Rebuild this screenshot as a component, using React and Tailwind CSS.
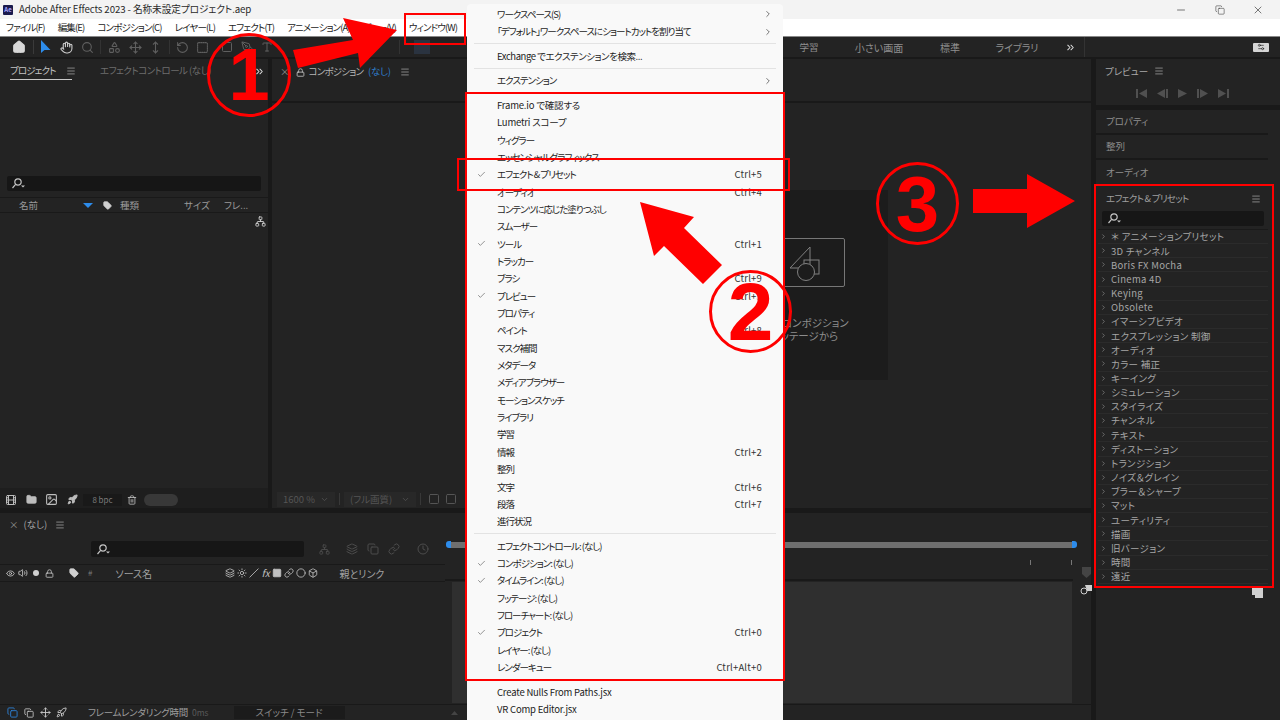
import React from "react";
import {
  House, Hand, Search, Move, MoveVertical, RotateCcw, Square, Pin, Folder, Trash2, Rocket, Tag, Eye,
  Volume2, Lock, Network, Menu, ChevronRight, ChevronDown, ChevronsRight, Check, Minus, X, Copy, Settings2,
  Shapes, Type, PenTool, Image, Film, Layers, Sun, Slash, Link, Clock, Circle, Box,
} from "lucide-react";

const menuTop = [
  { label: "ワークスペース(S)", arrow: true },
  { label: "「デフォルト」ワークスペースにショートカットを割り当て", arrow: true },
  { sep: true },
  { label: "Exchange でエクステンションを検索...", track: "tracking-[-0.45px]" },
  { sep: true },
  { label: "エクステンション", arrow: true },
  { sep: true },
  { label: "Frame.io で確認する", track: "tracking-[-0.2px]" },
  { label: "Lumetri スコープ", track: "tracking-[-0.2px]" },
  { label: "ウィグラー" },
  { label: "エッセンシャルグラフィックス" },
  { label: "エフェクト & プリセット", check: true, key: "Ctrl+5" },
  { label: "オーディオ", key: "Ctrl+4" },
  { label: "コンテンツに応じた塗りつぶし" },
  { label: "スムーザー" },
  { label: "ツール", check: true, key: "Ctrl+1" },
  { label: "トラッカー" },
  { label: "ブラシ", key: "Ctrl+9" },
  { label: "プレビュー", check: true, key: "Ctrl+3" },
  { label: "プロパティ" },
  { label: "ペイント", key: "Ctrl+8" },
  { label: "マスク補間" },
  { label: "メタデータ" },
  { label: "メディアブラウザー" },
  { label: "モーションスケッチ" },
  { label: "ライブラリ" },
  { label: "学習" },
  { label: "情報", key: "Ctrl+2" },
  { label: "整列" },
  { label: "文字", key: "Ctrl+6" },
  { label: "段落", key: "Ctrl+7" },
  { label: "進行状況" },
  { sep: true },
  { label: "エフェクトコントロール: (なし)" },
  { label: "コンポジション: (なし)", check: true },
  { label: "タイムライン: (なし)", check: true },
  { label: "フッテージ: (なし)" },
  { label: "フローチャート: (なし)" },
  { label: "プロジェクト", check: true, key: "Ctrl+0" },
  { label: "レイヤー: (なし)" },
  { label: "レンダーキュー", key: "Ctrl+Alt+0" },
  { sep: true },
  { label: "Create Nulls From Paths.jsx", track: "tracking-[-0.2px]" },
  { label: "VR Comp Editor.jsx", track: "tracking-[-0.2px]" },
];

const effects = [
  "＊ アニメーションプリセット", "3D チャンネル", "Boris FX Mocha", "Cinema 4D", "Keying", "Obsolete",
  "イマーシブビデオ", "エクスプレッション 制御", "オーディオ", "カラー 補正", "キーイング", "シミュレーション",
  "スタイライズ", "チャンネル", "テキスト", "ディストーション", "トランジション", "ノイズ＆グレイン",
  "ブラー＆シャープ", "マット", "ユーティリティ", "描画", "旧バージョン", "時間", "遠近",
];

// magnifier with the little dropdown caret
function SearchGlyph() {
  return (
    <svg width="16" height="11" viewBox="0 0 16 11" fill="none" stroke="#c4c4c4" strokeWidth="1.2">
      <circle cx="7" cy="4" r="3.2" />
      <path d="M4.6 6.4 1.5 10" />
      <path d="M10 7.5h4l-2 2z" fill="#c4c4c4" stroke="none" />
    </svg>
  );
}

function Burger({ className = "" }) {
  return <Menu size={10} strokeWidth={1.6} className={"shrink-0 text-[#b5b5b5] " + className} />;
}

function WindowMenu() {
  return (
    <div className="absolute left-[467px] top-[4px] w-[316px] h-[730px] bg-[#f9f9f9] rounded-[4px] pt-[1.6px] text-[#1c1c1c] text-[9.5px]">
      {menuTop.map((item, i) =>
        item.sep ? (
          <div key={i} className="h-[7.15px] flex items-center px-[7px]">
            <div className="h-px w-full bg-[#e3e3e3]" />
          </div>
        ) : (
          <div key={i} className="h-[17.35px] flex items-center relative pl-[30px] pr-[21px] whitespace-nowrap">
            {item.check && <Check size={9} strokeWidth={1.5} className="absolute left-[10px] text-[#444]" />}
            <span className={"flex-1 " + (item.track || "tracking-[-1px]")}>{item.label}</span>
            {item.key && <span className="text-[#333] tracking-[0.2px]">{item.key}</span>}
            {item.arrow && <ChevronRight size={10} strokeWidth={1.6} className="absolute right-[10px] text-[#333]" />}
          </div>
        )
      )}
    </div>
  );
}

function Annotations() {
  return (
    <>
      <div className="absolute left-[404px] top-[13px] w-[62px] h-[32px] border-2 border-[#ff0000]" />
      <div className="absolute left-[465px] top-[92px] w-[320px] h-[589px] border-2 border-[#ff0000]" />
      <div className="absolute left-[457px] top-[158px] w-[333px] h-[33px] border-2 border-[#ff0000]" />
      <div className="absolute left-[1094px] top-[184px] w-[180px] h-[404px] border-2 border-[#ff0000]" />

      <div className="absolute left-[207px] top-[33px] w-[84px] h-[84px] rounded-full border-[3px] border-[#ff0000] flex items-center justify-center text-[#ff0000] text-[74px] font-bold font-['Liberation_Sans',sans-serif] leading-none">1</div>
      <div className="absolute left-[709px] top-[270px] w-[83px] h-[83px] rounded-full border-[3px] border-[#ff0000] flex items-center justify-center text-[#ff0000] text-[82px] font-bold font-['Liberation_Sans',sans-serif] leading-none">2</div>
      <div className="absolute left-[876px] top-[162px] w-[83px] h-[83px] rounded-full border-[3px] border-[#ff0000] flex items-center justify-center text-[#ff0000] text-[78px] font-bold font-['Liberation_Sans',sans-serif] leading-none">3</div>

      <svg className="absolute left-0 top-0 pointer-events-none" width="1280" height="720" fill="#ff0000">
        <polygon points="397,30 343,18 353,40 293,50 298,68 358,53 360,68" />
        <polygon points="640,202 694,217 684,228 722,265 703,284 664,246 654,256" />
        <polygon points="973,189 1027,189 1027,174 1075,201 1027,228 1027,213 973,213" />
      </svg>
    </>
  );
}

function Toolbar() {
  return (
    <div className="h-[20px] bg-[#232323] flex items-center text-[#5f5f5f]">
      <House size={14} fill="#d8d8d8" className="text-[#d8d8d8] ml-[12px]" />
      <div className="w-px h-[14px] bg-[#3a3a3a] ml-[7px]" />
      <svg width="12" height="14" viewBox="0 0 12 14" className="ml-[6px]"><path d="M1 0v13l3.5-3h6z" fill="#2d8ceb" /></svg>
      <Hand size={13} className="text-[#cfcfcf] ml-[8px]" />
      <Search size={13} className="ml-[8px]" />
      <div className="w-px h-[14px] bg-[#333] ml-[6px]" />
      <Shapes size={13} className="ml-[7px]" />
      <Move size={13} className="ml-[8px]" />
      <MoveVertical size={13} className="ml-[7px]" />
      <div className="w-px h-[14px] bg-[#333] ml-[7px]" />
      <RotateCcw size={13} className="ml-[6px]" />
      <Square size={13} strokeDasharray="2 2" className="ml-[7px]" />
      <Square size={12} className="ml-[12px]" />
      <PenTool size={12} className="ml-[8px]" />
      <Type size={12} className="ml-[8px]" />
      <Pin size={12} className="ml-[86px]" />
      <div className="w-px h-[14px] bg-[#333] ml-[28px]" />
      <div className="w-[16px] h-[14px] bg-[#2a3340] ml-[14px]" />
      <div className="ml-[364px] w-[30px] text-center text-[9.5px] text-[#8f8f8f] mr-[25px]">学習</div>
      <div className="w-[60px] text-center text-[10px] text-[#8f8f8f]">小さい画面</div>
      <div className="w-[40px] text-center text-[10px] text-[#8f8f8f] ml-[21px]">標準</div>
      <div className="w-[50px] text-center text-[10px] text-[#8f8f8f] ml-[22px]">ライブラリ</div>
      <ChevronsRight size={11} strokeWidth={2.2} className="text-[#e0e0e0] ml-[23px]" />
      <div className="w-px h-[20px] bg-[#333] ml-[8px]" />
      <div className="ml-auto mr-[11px] w-[16px] h-[9px] bg-[#d5d5d5] rounded-[1px] flex items-center justify-center">
        <Settings2 size={8} className="text-[#222]" />
      </div>
    </div>
  );
}

function ProjectPanel() {
  return (
    <div className="w-[268px] bg-[#232323] flex flex-col relative">
      <div className="h-[25px] flex items-start text-[9.5px] whitespace-nowrap">
        <div className="ml-[10px] w-[62px] h-[21px] pt-[3px] flex items-center gap-[10px] border-b border-[#c8c8c8] text-[#c4c4c4] tracking-[-0.9px]">
          プロジェクト<Burger />
        </div>
        <span className="ml-[28px] mt-[4px] text-[#6e6e6e] tracking-[-0.5px]">エフェクトコントロール (なし)</span>
        <ChevronsRight size={11} strokeWidth={2.2} className="text-[#e0e0e0] ml-auto mr-[3px] mt-[7px]" />
      </div>
      <div className="mt-[92px] mx-[7px] h-[15px] bg-[#161616] rounded-[2px] flex items-center pl-[4px]"><SearchGlyph /></div>
      <div className="mt-[6px] h-[16px] border-y border-[#191919] flex items-center text-[9.5px] text-[#9a9a9a]">
        <span className="ml-[19px] w-[64px]">名前</span>
        <svg width="10" height="5" viewBox="0 0 10 5"><path d="M0 0h10L5 5z" fill="#2d8ceb" /></svg>
        <Tag size={9} fill="#cfcfcf" className="text-[#cfcfcf] ml-[10px]" />
        <span className="ml-[8px] w-[64px]">種類</span>
        <span className="w-[40px]">サイズ</span>
        <span>フレ...</span>
      </div>
      <div className="flex justify-end pr-[2px] pt-[3px]"><Network size={11} className="text-[#cfcfcf]" /></div>
      <div className="mt-auto h-[20px] pt-[3px] bg-[#1e1e1e] flex items-center text-[#bdbdbd]">
        <Film size={12} className="ml-[5px]" />
        <Folder size={11} fill="#bdbdbd" className="ml-[9px]" />
        <Image size={13} className="ml-[8px]" />
        <Rocket size={11} fill="#bdbdbd" className="ml-[9px]" />
        <div className="ml-[5px] w-[39px] h-[12px] bg-[#191919] text-[8px] text-[#7b7b7b] flex items-center justify-center">8 bpc</div>
        <Trash2 size={10} className="ml-[5px]" />
        <div className="ml-[7px] w-[34px] h-[12px] rounded-full bg-[#383838]" />
      </div>
    </div>
  );
}

function CompPanel() {
  return (
    <div className="flex-1 bg-[#232323] flex flex-col">
      <div className="h-[42px] flex items-start pt-[5px] text-[9.5px] text-[#b5b5b5] whitespace-nowrap">
        <span className="ml-[8px] text-[#8b8b8b]">×</span>
        <Lock size={9} className="ml-[6px] mt-[4px] text-[#d0d0d0]" />
        <span className="ml-[4px] tracking-[-0.8px]">コンポジション</span>
        <span className="ml-[5px] text-[#2f7fce] tracking-[-0.3px]">(なし)</span>
        <Burger className="ml-[9px] mt-[3px]" />
      </div>
      <div className="h-[2px] bg-[#191919]" />
      <div className="flex-1 flex flex-col">
        <div className="ml-[450px] mt-[87px] w-[166px] h-[190px] bg-[#1c1c1c] flex flex-col items-center text-[#8c8c8c]">
          <div className="mt-[48px] w-[80px] h-[49px] border border-[#777] rounded-[2px] flex items-center justify-center">
            <svg width="34" height="36" viewBox="0 0 34 36" fill="none" stroke="#808080" className="mt-[3px]">
              <path d="M22 1 2 22h20z" />
              <rect x="16" y="14" width="15" height="14" />
              <circle cx="18" cy="26" r="8.5" fill="#1c1c1c" />
            </svg>
          </div>
          <div className="mt-[29px] text-[10.5px] leading-[13px] text-center whitespace-nowrap">新規コンポジション<br />フッテージから</div>
        </div>
        <div className="mt-auto h-[18px] flex items-center text-[9.5px] text-[#555]">
          <div className="ml-[5px] w-[58px] h-[15px] bg-[#282828] flex items-center justify-between px-[6px]">1600 %<ChevronDown size={9} /></div>
          <div className="w-px h-[12px] bg-[#383838] ml-[4px]" />
          <div className="ml-[4px] w-[72px] h-[15px] bg-[#282828] flex items-center justify-between px-[6px]">(フル画質)<ChevronDown size={9} /></div>
          <div className="w-px h-[12px] bg-[#383838] ml-[4px]" />
          <Square size={12} className="ml-[7px]" />
          <Square size={12} className="ml-[5px]" />
        </div>
      </div>
    </div>
  );
}

function Timeline() {
  return (
    <div className="flex-1 bg-[#232323] flex flex-col">
      <div className="h-[28px] flex items-center text-[9.5px] text-[#a8a8a8] pb-[5px]">
        <span className="ml-[9px] text-[#8b8b8b]">×</span>
        <span className="ml-[5px]">(なし)</span>
        <Burger className="ml-[8px]" />
      </div>
      <div className="flex-1 flex min-h-0">
        <div className="w-[445px] flex flex-col">
          <div className="h-[23px] flex items-start text-[#4c4c4c]">
            <div className="ml-[91px] w-[213px] h-[16px] bg-[#161616] rounded-[2px] flex items-center pl-[5px]"><SearchGlyph /></div>
            <Network size={11} className="ml-[15px] mt-[3px]" />
            <Layers size={12} className="ml-[16px] mt-[2px]" />
            <Copy size={12} className="ml-[9px] mt-[2px]" />
            <Link size={12} className="ml-[9px] mt-[2px]" />
            <Clock size={12} className="ml-[17px] mt-[2px]" />
          </div>
          <div className="h-[18px] border-y border-[#191919] flex items-center text-[10px] text-[#a0a0a0]">
            <Eye size={9} className="ml-[6px] text-[#d0d0d0]" />
            <Volume2 size={10} className="ml-[3px] text-[#d0d0d0]" />
            <div className="ml-[5px] w-[6px] h-[6px] rounded-full bg-[#d0d0d0]" />
            <Lock size={9} className="ml-[6px] text-[#d0d0d0]" />
            <Tag size={10} fill="#d0d0d0" className="ml-[15px] text-[#d0d0d0]" />
            <span className="ml-[9px] text-[8px] text-[#777]">#</span>
            <span className="ml-[23px] w-[110px]">ソース名</span>
            <div className="flex items-center gap-[2px] text-[#c0c0c0] w-[114px]">
              <Layers size={10} /><Sun size={10} /><Slash size={10} />
              <span className="italic text-[10px] leading-none">fx</span>
              <Square size={10} fill="#c0c0c0" /><Link size={10} /><Circle size={10} /><Box size={10} />
            </div>
            <span>親とリンク</span>
          </div>
          <div className="flex-1" />
        </div>
        <div className="flex-1 flex flex-col">
          <div className="h-[7px] flex items-center">
            <div className="ml-[1px] w-[5px] h-[7px] bg-[#2d8ceb] rounded-l-[3px]" />
            <div className="flex-1 h-[6px] bg-[#6f6f6f]" />
            <div className="w-[5px] h-[7px] bg-[#2d8ceb] rounded-r-[3px] mr-[14px]" />
          </div>
          <div className="flex-1 flex min-h-0">
            <div className="flex-1 flex flex-col">
              <div className="h-[33px] border-b-2 border-[#191919] flex items-center justify-end gap-[40px] pr-[1px] pb-[2px]">
                <div className="w-px h-[5px] bg-[#777]" />
                <div className="w-px h-[5px] bg-[#777]" />
              </div>
              <div className="flex-1 pl-[7px] pr-[1px] py-[1px]">
                <div className="h-full bg-[#2f2f2f]" />
              </div>
            </div>
            <div className="w-[18px] flex flex-col items-center pl-[8px] pt-[19px]">
              <svg width="9" height="11" viewBox="0 0 9 11"><path d="M0 0h9v7l-4.5 4L0 7z" fill="#444" /></svg>
              <svg width="12" height="11" viewBox="0 0 12 11" className="mt-[6px]"><path d="M5 1h7v6H7z" fill="#d0d0d0" /><circle cx="4" cy="7" r="3" fill="#232323" stroke="#d0d0d0" /></svg>
            </div>
          </div>
        </div>
      </div>
      <div className="h-[16px] border-t border-[#191919] flex items-center text-[9.5px]">
        <Copy size={11} className="ml-[7px] text-[#2d7fd1]" />
        <Copy size={10} className="ml-[6px] text-[#c8c8c8]" />
        <Move size={11} className="ml-[6px] text-[#c8c8c8]" />
        <Rocket size={11} className="ml-[5px] text-[#c8c8c8]" />
        <span className="ml-[21px] w-[104px] text-[#9d9d9d] tracking-[-0.3px] whitespace-nowrap">フレームレンダリング時間</span>
        <span className="text-[#5a5a5a] text-[8.5px]">0ms</span>
        <div className="ml-[25px] w-[111px] h-[13px] bg-[#1b1b1b] flex items-center justify-center text-[#8a8a8a]">スイッチ / モード</div>
        <svg width="7" height="4" viewBox="0 0 7 4" className="ml-[106px]"><path d="M0 4h7L3.5 0z" fill="#444" /></svg>
      </div>
    </div>
  );
}

function RightColumn() {
  return (
    <div className="w-[184px] flex flex-col text-[9.5px] text-[#8e8e8e]">
      <div className="h-[46px] bg-[#232323] mb-[5px]">
        <div className="h-[23px] pl-[9px] pt-[1px] flex items-center gap-[6px] text-[#a8a8a8]">プレビュー<Burger /></div>
        <div className="flex items-center gap-[10px] pl-[40px] mt-[7px] text-[#505050]">
          <svg width="11" height="9" viewBox="0 0 11 9" fill="currentColor"><path d="M0 0h2v9H0zM11 0v9L3 4.5z" /></svg>
          <svg width="11" height="9" viewBox="0 0 11 9" fill="currentColor"><path d="M8 0v9L0 4.5zM9 0h2v9H9z" /></svg>
          <svg width="9" height="9" viewBox="0 0 9 9" fill="currentColor"><path d="M0 0v9l9-4.5z" /></svg>
          <svg width="11" height="9" viewBox="0 0 11 9" fill="currentColor"><path d="M0 0h2v9H0zM3 0v9l8-4.5z" /></svg>
          <svg width="11" height="9" viewBox="0 0 11 9" fill="currentColor"><path d="M0 0v9l8-4.5zM9 0h2v9H9z" /></svg>
        </div>
      </div>
      <div className="flex-1 bg-[#232323] flex flex-col">
        <div className="h-[25px] w-[172px] border-b-2 border-[#191919] flex items-center pl-[10px]">プロパティ</div>
        <div className="h-[25px] w-[172px] border-b-2 border-[#191919] flex items-center pl-[10px]">整列</div>
        <div className="h-[25px] w-[172px] flex items-center pl-[10px]">オーディオ</div>
        <div className="h-[26px] flex items-center pl-[10px] pr-[19px] pt-[1px] text-[#9f9f9f] justify-between tracking-[-0.7px]">エフェクト & プリセット<Burger /></div>
        <div className="ml-[6px] w-[162px] h-[15px] bg-[#161616] rounded-[2px] flex items-center pl-[5px]"><SearchGlyph /></div>
        <div className="mt-[3px] ml-[2px] w-[170px] border-t border-[#1a1a1a]">
          {effects.map((name) => (
            <div key={name} className="h-[14.17px] flex items-center border-b border-[#2b2b2b] text-[9.5px] text-[#a6a6a6] whitespace-nowrap">
              <ChevronRight size={7} strokeWidth={2} className="ml-[2px] mr-[4px] shrink-0 text-[#999]" />
              <span className="tracking-[0.3px]">{name}</span>
            </div>
          ))}
        </div>
        <div className="flex justify-end pr-[17px] pt-[3px]">
          <svg width="11" height="11" viewBox="0 0 11 11"><path d="M0 0h11v11H3V8H0z" fill="#d0d0d0" /></svg>
        </div>
      </div>
    </div>
  );
}

export default function App() {
  return (
    <div className="relative w-[1280px] h-[720px] overflow-hidden bg-[#191919] flex flex-col font-['Noto_Sans_CJK_JP','Noto_Sans',sans-serif] [font-feature-settings:'palt']">
      {/* title bar */}
      <div className="h-[19px] bg-[#f3f3f3] flex items-center text-[9.7px] text-[#2a2a2a]">
        <div className="ml-[3px] w-[10px] h-[10px] bg-[#1a1a4d] rounded-[1px] text-[6px] leading-[10px] text-center text-[#a9a6ff] font-bold">Ae</div>
        <span className="ml-[6px] tracking-[-0.1px]">Adobe After Effects 2023 - 名称未設定プロジェクト.aep</span>
        <div className="ml-auto flex items-center text-[#222]">
          <Minus size={12} strokeWidth={1.2} />
          <Copy size={10} strokeWidth={1.2} className="ml-[28px]" />
          <X size={12} strokeWidth={1.2} className="ml-[27px] mr-[16px]" />
        </div>
      </div>
      {/* menu bar */}
      <div className="h-[17px] bg-white border-b border-[#888] flex items-center gap-[13px] pl-[6px] text-[9.5px] text-[#222] whitespace-nowrap box-content tracking-[-0.85px]">
        <span>ファイル(F)</span>
        <span>編集(E)</span>
        <span>コンポジション(C)</span>
        <span>レイヤー(L)</span>
        <span>エフェクト(T)</span>
        <span>アニメーション(A)</span>
        <span>ビュー(V)</span>
        <span>ウィンドウ(W)</span>
      </div>
      <Toolbar />
      <div className="flex-1 flex gap-[5px] pt-[2px] min-h-0">
        <div className="w-[1091px] flex flex-col gap-[5px]">
          <div className="h-[449px] flex gap-[4px]">
            <ProjectPanel />
            <CompPanel />
          </div>
          <Timeline />
        </div>
        <RightColumn />
      </div>
      <WindowMenu />
      <Annotations />
    </div>
  );
}
